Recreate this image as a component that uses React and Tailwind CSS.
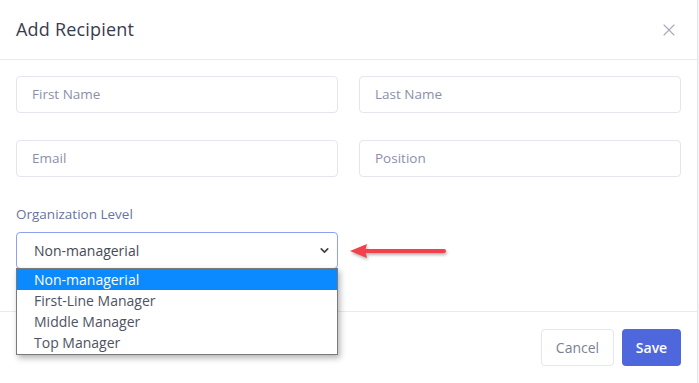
import React from 'react';
import { X, ChevronDown } from 'lucide-react';

const font = { fontFamily: '"Open Sans", "Noto Sans", sans-serif' };

const options = ['Non-managerial', 'First-Line Manager', 'Middle Manager', 'Top Manager'];

const Field = ({ placeholder }) => (
  <div className="h-[37px] border border-[#e3e6ee] rounded-[4px] flex items-center px-[15px] text-[13.5px] text-[#8c8fa6]">
    {placeholder}
  </div>
);

export default function App() {
  return (
    <div className="w-[699px] h-[383px] bg-[#f4f5f7] overflow-hidden" style={font}>
      <div className="w-[698px] h-[383px] bg-white border-r border-[#e4e6ea] flex flex-col">
        {/* Header */}
        <div className="h-[60px] border-b border-[#e9eaee] flex items-center justify-between pl-[16px] pr-[18px] shrink-0">
          <h2 className="text-[18px] font-medium text-[#3b3b4f] tracking-[0.2px]">Add Recipient</h2>
          <X className="w-[20px] h-[20px] text-[#a7aab8]" strokeWidth={1.3} />
        </div>

        {/* Body */}
        <div className="px-[16px] pt-[16px] h-[251px] shrink-0">
          <div className="grid grid-cols-2 gap-x-[21px] gap-y-[27px]">
            <Field placeholder="First Name" />
            <Field placeholder="Last Name" />
            <Field placeholder="Email" />
            <Field placeholder="Position" />
          </div>

          <div className="mt-[27px] text-[13.5px] text-[#6a73a0]">Organization Level</div>

          <div className="flex items-center mt-[8px]">
            <div className="relative w-[322px]">
              <div className="h-[37px] border border-[#8fa0f2] rounded-[4px] flex items-center justify-between pl-[17px] pr-[6px] text-[14px] text-[#474a57]">
                <span>Non-managerial</span>
                <ChevronDown className="w-[13px] h-[13px] text-[#3f414a]" strokeWidth={3} />
              </div>
              {/* Open native-like list */}
              <div className="absolute left-0 top-[36px] w-[322px] bg-white border border-[#7a7a7a] shadow-[2px_3px_6px_rgba(0,0,0,0.3)] z-10 pb-[1px]">
                {options.map((o, i) => (
                  <div
                    key={o}
                    className={`h-[21px] flex items-center pl-[17px] text-[14px] ${i === 0 ? 'bg-[#0b8aff] text-white' : 'text-[#4f5262]'}`}
                  >
                    {o}
                  </div>
                ))}
              </div>
            </div>

            {/* Red annotation arrow */}
            <svg width="100" height="20" viewBox="0 0 100 20" className="ml-[10px]" style={{ filter: 'drop-shadow(1px 2px 1.5px rgba(0,0,0,0.3))' }}>
              <line x1="14" y1="10" x2="96" y2="10" stroke="#f2414a" strokeWidth="4" strokeLinecap="round" />
              <polygon points="2,10 19,3 17,10 19,17" fill="#f2414a" />
            </svg>
          </div>
        </div>

        {/* Footer */}
        <div className="border-t border-[#e9eaee] flex-1 flex items-start justify-end gap-[8px] pt-[17px] pr-[16px]">
          <button className="h-[37px] w-[73px] border border-[#e2e6f5] rounded-[4px] text-[14px] text-[#7b7f93]">Cancel</button>
          <button className="h-[37px] w-[59px] bg-[#4f67dc] rounded-[4px] text-[14px] text-white font-semibold">Save</button>
        </div>
      </div>
    </div>
  );
}
